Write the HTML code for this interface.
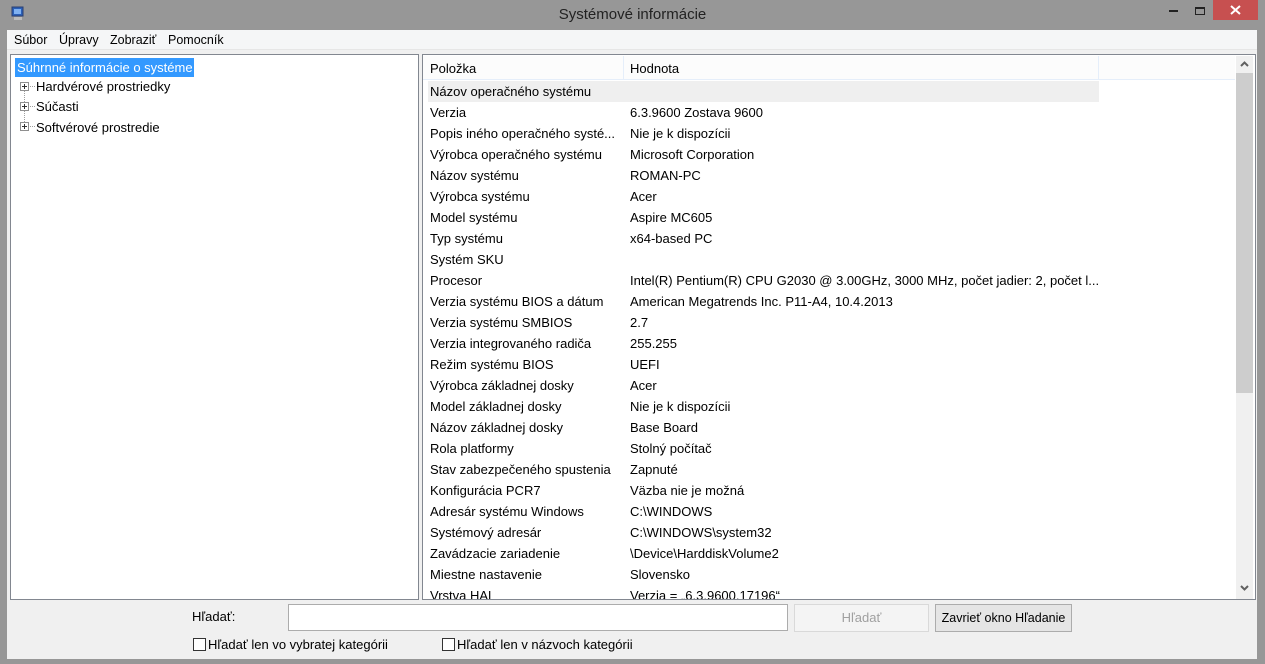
<!DOCTYPE html>
<html><head><meta charset="utf-8"><style>
*{margin:0;padding:0;box-sizing:border-box}
body{width:1265px;height:664px;background:#979797;font-family:"Liberation Sans",sans-serif;font-size:13px;color:#000;position:relative;overflow:hidden}
.abs{position:absolute}
.title{left:0;top:0;width:1265px;height:30px;text-align:center;line-height:30px;font-size:15px;color:#222}
.client{left:7px;top:30px;width:1250px;height:629px;background:#f0f0f0}
.menu{left:7px;top:30px;width:1250px;height:20px;background:#f5f6f7;border-bottom:1px solid #e6e6e6;font-size:12.5px}
.menu span{position:absolute;top:3px}
.left{left:10px;top:54px;width:409px;height:546px;background:#fff;border:1px solid #828790}
.right{left:422px;top:54px;width:834px;height:546px;background:#fff;border:1px solid #828790;overflow:hidden}
.row{position:absolute;left:7px;height:21px;line-height:21px;white-space:nowrap}
.row .v{position:absolute;left:200px}
.tree{position:absolute;white-space:nowrap}
.plus{position:absolute;width:9px;height:9px;border:1px solid #8f8f8f;background:#fff}
.plus:before{content:"";position:absolute;left:1px;top:3px;width:5px;height:1px;background:#333}
.plus:after{content:"";position:absolute;left:3px;top:1px;width:1px;height:5px;background:#333}
</style></head><body>
<div class="abs title">Systémové informácie</div>
<svg class="abs" style="left:11px;top:6px" width="14" height="16"><rect x="1" y="1" width="11" height="9" fill="#2a5fb8" stroke="#2b3f70"/><rect x="3" y="3" width="7" height="5" fill="#7fb0f0"/><rect x="3" y="11" width="8" height="3" fill="#bbb"/></svg>
<div class="abs" style="left:1169px;top:10px;width:9px;height:2px;background:#222"></div>
<div class="abs" style="left:1195px;top:7px;width:10px;height:8px;border:1px solid #222;border-top-width:2px"></div>
<div class="abs" style="left:1213px;top:0;width:45px;height:20px;background:#c75050"></div>
<svg class="abs" style="left:1230px;top:5px" width="11" height="10"><path d="M1 1L10 9M10 1L1 9" stroke="#fff" stroke-width="2"/></svg>
<div class="abs client"></div>
<div class="abs menu"><span style="left:7px">Súbor</span><span style="left:52px">Úpravy</span><span style="left:103px">Zobraziť</span><span style="left:161px">Pomocník</span></div>
<div class="abs left">
<div class="tree" style="left:4px;top:3px;height:19px;line-height:19px;background:#3399ff;color:#fff;padding:0 2px;width:179px">Súhrnné informácie o systéme</div>
<div class="abs" style="left:13px;top:28px;height:45px;border-left:1px dotted #a0a0a0"></div>
<div class="plus" style="left:9px;top:27px"></div><div class="abs" style="left:19px;top:31px;width:5px;border-top:1px dotted #a0a0a0"></div><div class="tree" style="left:25px;top:24px">Hardvérové prostriedky</div>
<div class="plus" style="left:9px;top:47px"></div><div class="abs" style="left:19px;top:51px;width:5px;border-top:1px dotted #a0a0a0"></div><div class="tree" style="left:25px;top:44px">Súčasti</div>
<div class="plus" style="left:9px;top:67px"></div><div class="abs" style="left:19px;top:71px;width:5px;border-top:1px dotted #a0a0a0"></div><div class="tree" style="left:25px;top:65px">Softvérové prostredie</div>
</div>
<div class="abs right">
<div class="abs" style="left:0;top:1px;width:812px;height:24px;background:#fcfcfc;border-bottom:1px solid #e5eefa"></div>
<div class="abs" style="left:200px;top:1px;width:1px;height:24px;background:#e5eefa"></div>
<div class="abs" style="left:675px;top:1px;width:1px;height:24px;background:#e5eefa"></div>
<div class="row" style="top:3px">Položka<span class="v">Hodnota</span></div>
<div class="abs" style="left:5px;top:26px;width:671px;height:21px;background:#efefef"></div>
<div class="row" style="top:26px">Názov operačného systému</div>
<div class="row" style="top:47px">Verzia<span class="v">6.3.9600 Zostava 9600</span></div>
<div class="row" style="top:68px">Popis iného operačného systé...<span class="v">Nie je k dispozícii</span></div>
<div class="row" style="top:89px">Výrobca operačného systému<span class="v">Microsoft Corporation</span></div>
<div class="row" style="top:110px">Názov systému<span class="v">ROMAN-PC</span></div>
<div class="row" style="top:131px">Výrobca systému<span class="v">Acer</span></div>
<div class="row" style="top:152px">Model systému<span class="v">Aspire MC605</span></div>
<div class="row" style="top:173px">Typ systému<span class="v">x64-based PC</span></div>
<div class="row" style="top:194px">Systém SKU</div>
<div class="row" style="top:215px">Procesor<span class="v">Intel(R) Pentium(R) CPU G2030 @ 3.00GHz, 3000 MHz, počet jadier: 2, počet l...</span></div>
<div class="row" style="top:236px">Verzia systému BIOS a dátum<span class="v">American Megatrends Inc. P11-A4, 10.4.2013</span></div>
<div class="row" style="top:257px">Verzia systému SMBIOS<span class="v">2.7</span></div>
<div class="row" style="top:278px">Verzia integrovaného radiča<span class="v">255.255</span></div>
<div class="row" style="top:299px">Režim systému BIOS<span class="v">UEFI</span></div>
<div class="row" style="top:320px">Výrobca základnej dosky<span class="v">Acer</span></div>
<div class="row" style="top:341px">Model základnej dosky<span class="v">Nie je k dispozícii</span></div>
<div class="row" style="top:362px">Názov základnej dosky<span class="v">Base Board</span></div>
<div class="row" style="top:383px">Rola platformy<span class="v">Stolný počítač</span></div>
<div class="row" style="top:404px">Stav zabezpečeného spustenia<span class="v">Zapnuté</span></div>
<div class="row" style="top:425px">Konfigurácia PCR7<span class="v">Väzba nie je možná</span></div>
<div class="row" style="top:446px">Adresár systému Windows<span class="v">C:\WINDOWS</span></div>
<div class="row" style="top:467px">Systémový adresár<span class="v">C:\WINDOWS\system32</span></div>
<div class="row" style="top:488px">Zavádzacie zariadenie<span class="v">\Device\HarddiskVolume2</span></div>
<div class="row" style="top:509px">Miestne nastavenie<span class="v">Slovensko</span></div>
<div class="row" style="top:530px">Vrstva HAL<span class="v">Verzia = „6.3.9600.17196“</span></div>
<div class="abs" style="left:813px;top:1px;width:17px;height:543px;background:#f0f0f0"></div>
<div class="abs" style="left:813px;top:18px;width:17px;height:320px;background:#cdcdcd"></div>
<svg class="abs" style="left:817px;top:6px" width="9" height="6"><path d="M1 5L4.5 1.5L8 5" stroke="#606060" stroke-width="2" fill="none"/></svg>
<svg class="abs" style="left:817px;top:530px" width="9" height="6"><path d="M1 1L4.5 4.5L8 1" stroke="#606060" stroke-width="2" fill="none"/></svg>
</div>
<div class="abs" style="left:192px;top:609px">Hľadať:</div>
<div class="abs" style="left:288px;top:604px;width:500px;height:27px;background:#fff;border:1px solid #acacac"></div>
<div class="abs" style="left:794px;top:604px;width:135px;height:28px;background:#f4f4f4;border:1px solid #d9d9d9;color:#a0a0a0;text-align:center;line-height:26px">Hľadať</div>
<div class="abs" style="left:935px;top:604px;width:137px;height:28px;background:#e5e5e5;border:1px solid #acacac;text-align:center;line-height:26px;font-size:12.5px">Zavrieť okno Hľadanie</div>
<div class="abs" style="left:193px;top:638px;width:13px;height:13px;border:1px solid #333;background:#fff"></div>
<div class="abs" style="left:208px;top:637px">Hľadať len vo vybratej kategórii</div>
<div class="abs" style="left:442px;top:638px;width:13px;height:13px;border:1px solid #333;background:#fff"></div>
<div class="abs" style="left:457px;top:637px">Hľadať len v názvoch kategórii</div>
</body></html>
